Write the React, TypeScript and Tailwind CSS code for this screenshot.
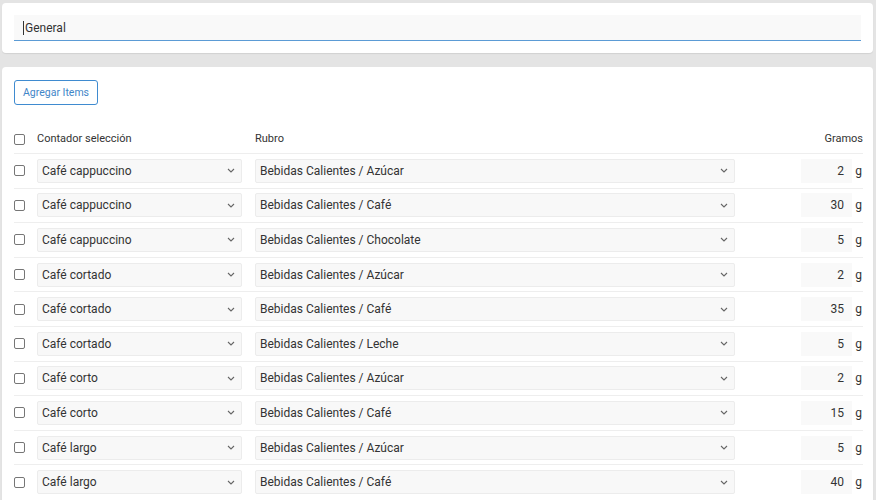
import React from "react";

const rows: [string, string, string][] = [
  ["Café cappuccino", "Bebidas Calientes / Azúcar", "2"],
  ["Café cappuccino", "Bebidas Calientes / Café", "30"],
  ["Café cappuccino", "Bebidas Calientes / Chocolate", "5"],
  ["Café cortado", "Bebidas Calientes / Azúcar", "2"],
  ["Café cortado", "Bebidas Calientes / Café", "35"],
  ["Café cortado", "Bebidas Calientes / Leche", "5"],
  ["Café corto", "Bebidas Calientes / Azúcar", "2"],
  ["Café corto", "Bebidas Calientes / Café", "15"],
  ["Café largo", "Bebidas Calientes / Azúcar", "5"],
  ["Café largo", "Bebidas Calientes / Café", "40"],
];

function Chevron() {
  return (
    <svg width="8" height="5" viewBox="0 0 8 5" className="shrink-0">
      <path d="M1 1 L4 4 L7 1" fill="none" stroke="#666" strokeWidth="1.1" />
    </svg>
  );
}

function Box() {
  return <div className="w-[11px] h-[11px] rounded-[2px] border border-[#767676] bg-white shrink-0" />;
}

function Sel({ text, w }: { text: string; w: string }) {
  return (
    <div className={`${w} h-[24px] bg-[#f8f8f8] border border-[#ececec] rounded-[2px] flex items-center pl-[4px] pr-[6px] justify-between shrink-0`}>
      <span className="text-[12px] text-[#333]">{text}</span>
      <Chevron />
    </div>
  );
}

export default function App() {
  return (
    <div
      className="w-[876px] h-[500px] bg-[#e4e4e4] pt-[3px] pl-[2px] pr-[3px] overflow-hidden"
      style={{ fontFamily: "Roboto, 'Liberation Sans', sans-serif" }}
    >
      <div className="bg-white rounded-[4px] p-[12px] shadow-[0_1px_1px_rgba(0,0,0,0.08)]">
        <div className="h-[26px] bg-[#f9f9f9] border-b border-[#5b9bd5] flex items-center pl-[9px]">
          <span className="w-px h-[14px] bg-[#333] mr-[1px]" />
          <span className="text-[12px] text-[#333]">General</span>
        </div>
      </div>
      <div className="mt-[14px] bg-white rounded-[4px] pt-[13px] pl-[12px] pr-[10px] h-[440px] shadow-[0_1px_1px_rgba(0,0,0,0.08)]">
        <button className="h-[25px] px-[8px] pt-[2px] border border-[#3f8bd0] rounded-[3px] text-[10.5px] leading-none text-[#3f86c8] bg-white block">
          Agregar Items
        </button>
        <div className="mt-[21px] h-[27px] flex items-center">
          <div className="w-[23px] flex"><Box /></div>
          <div className="w-[218px] text-[11px] text-[#333]">Contador selección</div>
          <div className="flex-1 text-[11px] text-[#333]">Rubro</div>
          <div className="text-[11px] text-[#333]">Gramos</div>
        </div>
        {rows.map(([a, b, g], i) => (
          <div key={i} className="h-[34.6px] border-t border-[#eeeeee] flex items-center">
            <div className="w-[23px] flex"><Box /></div>
            <Sel text={a} w="w-[205px]" />
            <div className="w-[13px]" />
            <Sel text={b} w="w-[480px]" />
            <div className="flex-1" />
            <div className="w-[51px] h-[24px] bg-[#f9f9f9] flex items-center justify-end pr-[8px] text-[12px] text-[#333]">
              {g}
            </div>
            <div className="w-[10px] text-right text-[12px] text-[#333] mr-[1px]">g</div>
          </div>
        ))}
      </div>
    </div>
  );
}
